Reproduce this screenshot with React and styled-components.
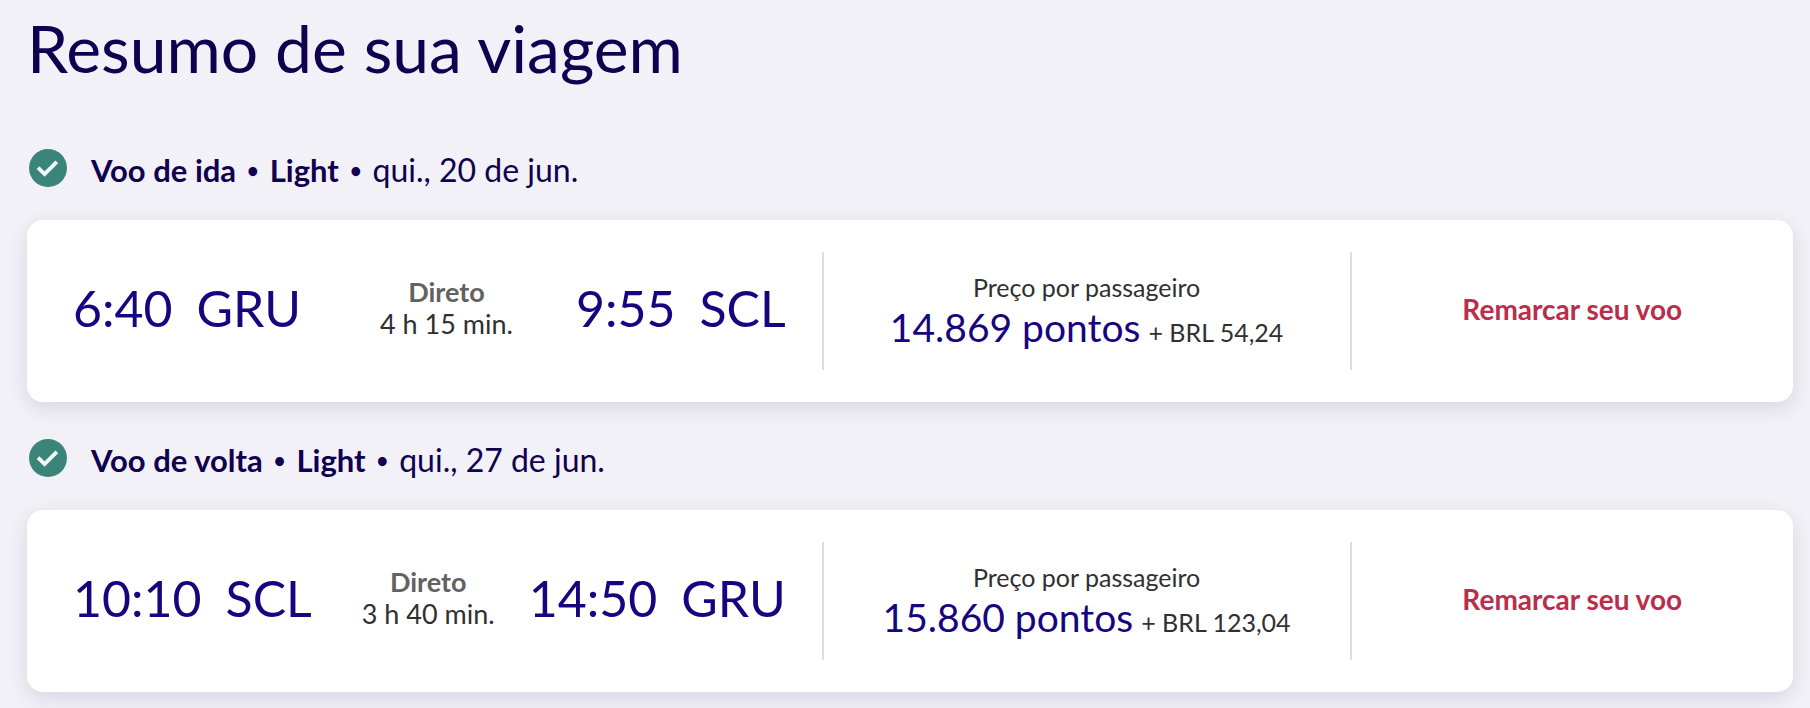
import React from "react";
import styled, { createGlobalStyle } from "styled-components";

const GlobalStyle = createGlobalStyle`
  * {
    box-sizing: border-box;
  }
  body {
    margin: 0;
    background: #f2f1f7;
    font-family: Lato, "Open Sans", sans-serif;
    color: #303030;
  }
`;

const Page = styled.main`
  padding: 8px 17px 16px 27px;
`;

const Title = styled.h1`
  margin: 0 0 61px;
  font-size: 66px;
  line-height: 80px;
  font-weight: 400;
  color: #10004f;
`;

const Flights = styled.div`
  display: flex;
  flex-direction: column;
  gap: 37px;
`;

const Flight = styled.section`
  display: flex;
  flex-direction: column;
  gap: 29px;
`;

const FlightHeader = styled.header`
  display: flex;
  align-items: flex-start;
  gap: 24px;
  padding-left: 2px;
`;

const CheckIcon = styled.svg`
  flex: none;
  width: 38px;
  height: 38px;
`;

const FlightTitle = styled.h2`
  display: flex;
  align-items: center;
  gap: 11px;
  margin: 0;
  font-size: 31px;
  line-height: 42px;
  font-weight: 700;
  color: #10004f;
`;

const Bullet = styled.span`
  font-size: 20px;
`;

const FlightDate = styled.span`
  font-size: 32px;
  font-weight: 400;
`;

const Card = styled.div`
  display: grid;
  grid-template-columns: 9fr 6fr 5fr;
  padding: 32px 0;
  border-radius: 16px;
  background: #fff;
  box-shadow: 0 6px 20px rgba(28, 20, 80, 0.12);
`;

const Leg = styled.div`
  display: flex;
  align-items: center;
  justify-content: space-between;
  min-height: 118px;
  padding: 0 36px 6px 46px;
`;

const Stop = styled.div`
  display: flex;
  gap: 24px;
  padding-right: ${(p) => (p.$departure ? "16px" : "0")};
  font-size: 50px;
  line-height: 60px;
  color: #170580;
  white-space: nowrap;
`;

const Duration = styled.div`
  font-size: 27px;
  line-height: 32px;
  text-align: center;
  white-space: nowrap;
`;

const StopType = styled.strong`
  display: block;
  color: #626262;
`;

const Price = styled.div`
  display: flex;
  flex-direction: column;
  align-items: center;
  justify-content: center;
  padding-top: 4px;
  border: solid #dcdcdf;
  border-width: 0 2px;
  font-size: 25px;
`;

const PriceLabel = styled.span`
  line-height: 32px;
`;

const PriceLine = styled.div`
  display: flex;
  align-items: baseline;
  gap: 8px;
  line-height: 48px;
  white-space: nowrap;
`;

const Points = styled.span`
  font-size: 39px;
  color: #170580;
`;

const Action = styled.div`
  display: flex;
  align-items: center;
  justify-content: center;
  padding-bottom: 4px;
`;

const RebookButton = styled.button`
  padding: 0;
  border: 0;
  background: none;
  font-family: inherit;
  font-size: 28px;
  line-height: 36px;
  font-weight: 700;
  color: #ba2d4b;
  cursor: pointer;
`;

const flights = [
  {
    name: "Voo de ida",
    fare: "Light",
    date: "qui., 20 de jun.",
    from: ["6:40", "GRU"],
    to: ["9:55", "SCL"],
    duration: "4 h 15 min.",
    points: "14.869 pontos",
    taxes: "+ BRL 54,24",
  },
  {
    name: "Voo de volta",
    fare: "Light",
    date: "qui., 27 de jun.",
    from: ["10:10", "SCL"],
    to: ["14:50", "GRU"],
    duration: "3 h 40 min.",
    points: "15.860 pontos",
    taxes: "+ BRL 123,04",
  },
];

function FlightSummary({ flight }) {
  return (
    <Flight>
      <FlightHeader>
        <CheckIcon viewBox="0 0 38 38" aria-hidden="true">
          <circle cx="19" cy="19" r="19" fill="#3b8479" />
          <path d="M9 18.6 15.6 25.1 27.8 12.9" fill="none" stroke="#f2fafb" strokeWidth="3.8" />
        </CheckIcon>
        <FlightTitle>
          <span>{flight.name}</span>
          <Bullet>•</Bullet>
          <span>{flight.fare}</span>
          <Bullet>•</Bullet>
          <FlightDate>{flight.date}</FlightDate>
        </FlightTitle>
      </FlightHeader>
      <Card>
        <Leg>
          <Stop $departure>
            <span>{flight.from[0]}</span>
            <span>{flight.from[1]}</span>
          </Stop>
          <Duration>
            <StopType>Direto</StopType>
            {flight.duration}
          </Duration>
          <Stop>
            <span>{flight.to[0]}</span>
            <span>{flight.to[1]}</span>
          </Stop>
        </Leg>
        <Price>
          <PriceLabel>Preço por passageiro</PriceLabel>
          <PriceLine>
            <Points>{flight.points}</Points>
            <span>{flight.taxes}</span>
          </PriceLine>
        </Price>
        <Action>
          <RebookButton type="button">Remarcar seu voo</RebookButton>
        </Action>
      </Card>
    </Flight>
  );
}

export default function App() {
  return (
    <Page>
      <GlobalStyle />
      <Title>Resumo de sua viagem</Title>
      <Flights>
        {flights.map((flight) => (
          <FlightSummary key={flight.name} flight={flight} />
        ))}
      </Flights>
    </Page>
  );
}
